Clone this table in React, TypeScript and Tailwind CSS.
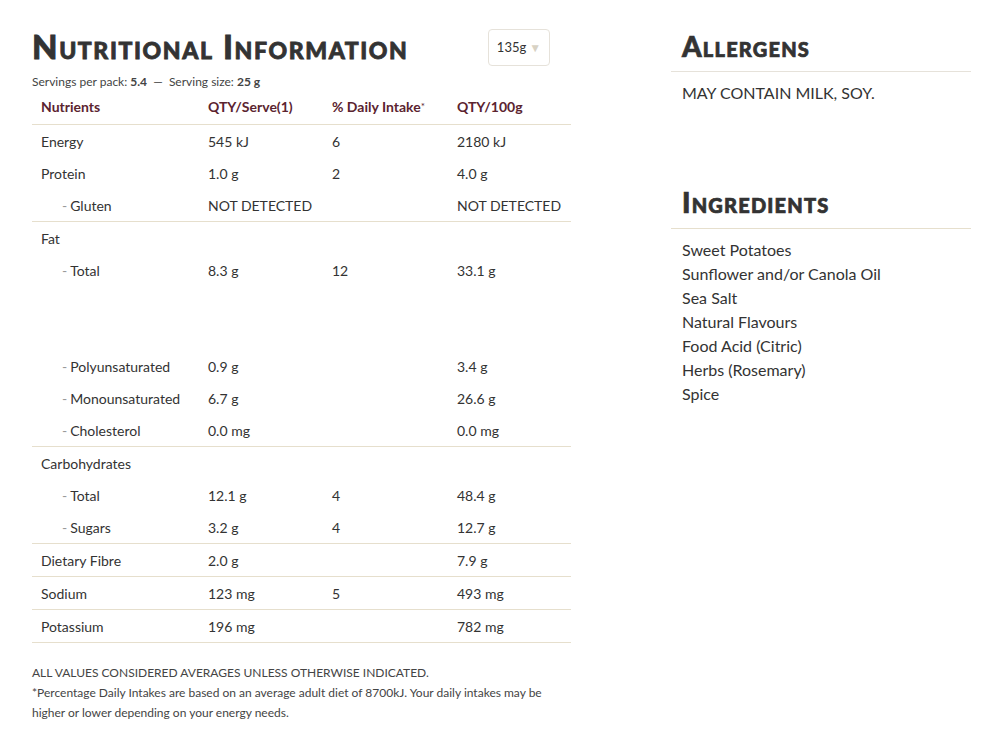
const rows: { label: string; serve?: string; daily?: string; per100?: string; sub?: boolean; border?: boolean }[] = [
  { label: "Energy", serve: "545 kJ", daily: "6", per100: "2180 kJ" },
  { label: "Protein", serve: "1.0 g", daily: "2", per100: "4.0 g" },
  { label: "Gluten", serve: "NOT DETECTED", per100: "NOT DETECTED", sub: true, border: true },
  { label: "Fat" },
  { label: "Total", serve: "8.3 g", daily: "12", per100: "33.1 g", sub: true },
  { label: "" },
  { label: "" },
  { label: "Polyunsaturated", serve: "0.9 g", per100: "3.4 g", sub: true },
  { label: "Monounsaturated", serve: "6.7 g", per100: "26.6 g", sub: true },
  { label: "Cholesterol", serve: "0.0 mg", per100: "0.0 mg", sub: true, border: true },
  { label: "Carbohydrates" },
  { label: "Total", serve: "12.1 g", daily: "4", per100: "48.4 g", sub: true },
  { label: "Sugars", serve: "3.2 g", daily: "4", per100: "12.7 g", sub: true, border: true },
  { label: "Dietary Fibre", serve: "2.0 g", per100: "7.9 g", border: true },
  { label: "Sodium", serve: "123 mg", daily: "5", per100: "493 mg", border: true },
  { label: "Potassium", serve: "196 mg", per100: "782 mg", border: true },
];

const ingredients = [
  "Sweet Potatoes",
  "Sunflower and/or Canola Oil",
  "Sea Salt",
  "Natural Flavours",
  "Food Acid (Citric)",
  "Herbs (Rosemary)",
  "Spice",
];

const cols = "grid grid-cols-[167px_124px_125px_123px]";

export default function App() {
  return (
    <div className="min-h-[750px] bg-white text-[#333] font-['Lato',sans-serif] flex pl-8 pt-[28px] gap-[100px]">
      <section className="w-[539px]">
        <div className="flex items-start justify-between pr-[21px]">
          <h1 className="text-[33px] leading-[40px] font-black tracking-[1.6px] [font-variant:small-caps] [-webkit-text-stroke:0.8px_#333] -mt-[2px]">
            Nutritional Information
          </h1>
          <div className="mt-[1px] h-[37px] w-[62px] rounded border border-[#e6e2da] flex items-center justify-center gap-[3px] text-[13px]">
            <span>135g</span>
            <span className="text-[12px] text-[#d8d2c4]">▼</span>
          </div>
        </div>
        <div className="text-[12px] leading-[16px] mt-[8px] text-[#444]">
          Servings per pack: <b className="font-bold">5.4</b> &nbsp;— &nbsp;Serving size: <b className="font-bold">25 g</b>
        </div>
        <div className={`${cols} border-b border-[#e6dfcd] pb-[7px] pt-[7px] text-[14px] leading-[20px] font-bold text-[#5b2430]`}>
          <div className="pl-[9px]">Nutrients</div>
          <div className="pl-[9px]">QTY/Serve(1)</div>
          <div className="pl-[9px]">
            % Daily Intake<sup className="font-normal text-[10px] relative -top-[2px]">*</sup>
          </div>
          <div className="pl-[9px]">QTY/100g</div>
        </div>
        <div className="text-[14px]">
          {rows.map((r, i) => (
            <div key={i} className={`${cols} h-[32px] box-content items-center ${r.border ? "border-b border-[#e6dfcd]" : ""}`}>
              <div className={r.sub ? "pl-[30px]" : "pl-[9px]"}>
                {r.sub && <span className="text-[#999] mr-[3px]">-</span>}
                {r.label}
              </div>
              <div className="pl-[9px]">{r.serve}</div>
              <div className="pl-[9px]">{r.daily}</div>
              <div className="pl-[9px]">{r.per100}</div>
            </div>
          ))}
        </div>
        <div className="mt-[20px] text-[12px] leading-[20px] text-[#444]">
          <p>ALL VALUES CONSIDERED AVERAGES UNLESS OTHERWISE INDICATED.</p>
          <p>
            *Percentage Daily Intakes are based on an average adult diet of 8700kJ. Your daily intakes may be higher or lower depending on your energy needs.
          </p>
        </div>
      </section>
      <aside className="w-[300px]">
        <h2 className="pl-[11px] text-[28px] leading-[36px] font-black tracking-[1.2px] [font-variant:small-caps] [-webkit-text-stroke:0.7px_#333] border-b border-[#e6e2da] pb-[7px]">
          Allergens
        </h2>
        <p className="pl-[11px] mt-[9px] text-[16px] leading-[24px]">MAY CONTAIN MILK, SOY.</p>
        <h2 className="mt-[79px] pl-[11px] text-[28px] leading-[36px] font-black tracking-[1.2px] [font-variant:small-caps] [-webkit-text-stroke:0.7px_#333] border-b border-[#e6dfcd] pb-[8px]">
          Ingredients
        </h2>
        <ul className="pl-[11px] mt-[9px] text-[16px] leading-[24px]">
          {ingredients.map((x) => (
            <li key={x}>{x}</li>
          ))}
        </ul>
      </aside>
    </div>
  );
}
